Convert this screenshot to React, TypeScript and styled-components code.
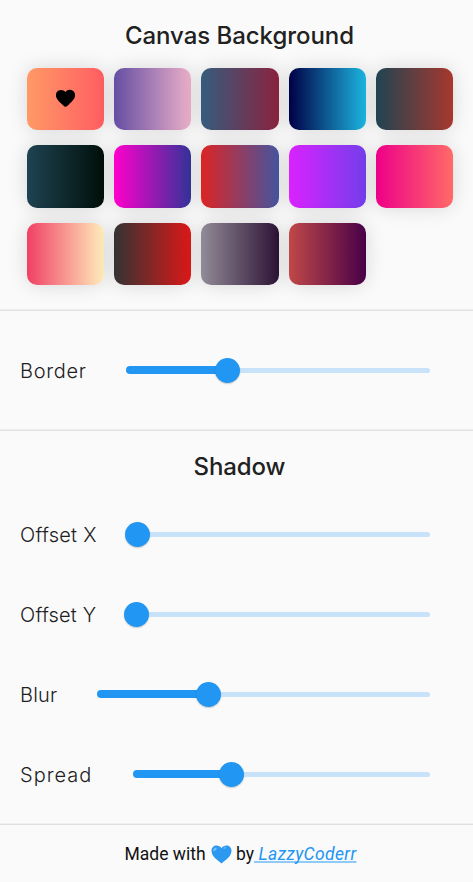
import React from 'react';
import styled, { createGlobalStyle } from 'styled-components';

const GlobalStyle = createGlobalStyle`
  *, *::before, *::after { box-sizing: border-box; }
  html, body { margin: 0; padding: 0; background: #fafafa; }
  body { font-family: Inter, sans-serif; color: #212121; overflow: hidden; }
`;

const Page = styled.main`
  display: flex;
  flex-direction: column;
  width: 100%;
  height: 882px;
  background: #fafafa;
`;

const Section = styled.section<{ $height: number }>`
  flex: none;
  height: ${(p) => p.$height}px;
  border-bottom: 1px solid #e0e0e0;
  box-shadow: inset 0 -1px 0 #efefef;
`;

const Title = styled.h2<{ $spacing: number }>`
  margin: 0;
  height: 54px;
  padding: 18px 0 0 6px;
  font-size: 24px;
  font-weight: 500;
  line-height: 36px;
  text-align: center;
  letter-spacing: ${(p) => p.$spacing}px;
  white-space: nowrap;
`;

const Swatches = styled.div`
  display: grid;
  grid-template-columns: repeat(5, 77.4px);
  grid-auto-rows: 62.3px;
  column-gap: 9.85px;
  row-gap: 15.2px;
  padding: 13.8px 0 0 26.8px;
`;

const Swatch = styled.button<{ $from: string; $to: string }>`
  display: flex;
  align-items: center;
  justify-content: center;
  padding: 0;
  border: 0;
  border-radius: 10px;
  background: linear-gradient(90deg, ${(p) => p.$from}, ${(p) => p.$to});
  box-shadow: 0 0 20px rgba(0, 0, 0, 0.14);
`;

const Row = styled.div<{ $height: number }>`
  display: flex;
  align-items: center;
  height: ${(p) => p.$height}px;
  padding: 0 43px 0 20px;
`;

const SliderList = styled.div`
  padding-top: 9px;
`;

const Label = styled.label<{ $width: number; $spacing: number }>`
  flex: none;
  width: ${(p) => p.$width}px;
  padding-top: 2px;
  font-size: 20px;
  font-weight: 300;
  line-height: 30px;
  letter-spacing: ${(p) => p.$spacing}px;
  white-space: nowrap;
`;

const Slider = styled.div`
  display: flex;
  flex: 1;
  align-items: center;
  height: 26px;
`;

const Active = styled.div<{ $width: number }>`
  flex: none;
  width: ${(p) => p.$width}px;
  height: 7.6px;
  border-radius: 4px 0 0 4px;
  background: #2196f3;
`;

const Thumb = styled.div`
  flex: none;
  width: 25px;
  height: 25px;
  margin-left: -1px;
  border-radius: 50%;
  background: #2196f3;
  box-shadow: 0 1px 1.5px rgba(0, 0, 0, 0.2);
  z-index: 1;
`;

const Rest = styled.div`
  flex: 1;
  height: 5px;
  margin-left: -2px;
  border-radius: 0 3px 3px 0;
  background: #c7e2f9;
`;

const Footer = styled.footer`
  display: flex;
  align-items: center;
  height: 57px;
  padding: 1px 0 0 124.5px;
  color: #111;
  font: 400 17.5px/24px Roboto, sans-serif;
  white-space: pre;
`;

const Heart = styled.svg`
  flex: none;
  margin: 0 0 0 5px;
`;

const Author = styled.a`
  color: #2196f3;
  font-style: italic;
  letter-spacing: 0.35px;
  text-decoration: underline;
  text-decoration-color: #90caf9;
  text-decoration-thickness: 2px;
  text-underline-offset: 1px;
  text-decoration-skip-ink: none;
`;

const gradients: [string, string][] = [
  ['#ff9966', '#ff5e62'],
  ['#654ea3', '#eaafc8'],
  ['#355c7d', '#8a2340'],
  ['#000046', '#1cb5e0'],
  ['#1f4452', '#a8382e'],
  ['#1e4351', '#000f0a'],
  ['#ff00cc', '#333399'],
  ['#dd2424', '#45559f'],
  ['#da22ff', '#733eeb'],
  ['#ee0088', '#ff6a68'],
  ['#f04065', '#ffedbc'],
  ['#333333', '#dd1818'],
  ['#928b97', '#2c1335'],
  ['#c04848', '#480048'],
];

type SliderSpec = { label: string; spacing: number; start: number; value: number };

const border: SliderSpec = { label: 'Border', spacing: 0.7, start: 126, value: 90 };
const shadow: SliderSpec[] = [
  { label: 'Offset X', spacing: 0.25, start: 126, value: 0 },
  { label: 'Offset Y', spacing: 0.2, start: 124.6, value: 0 },
  { label: 'Blur', spacing: 0.2, start: 97, value: 100 },
  { label: 'Spread', spacing: 1, start: 132.5, value: 87.5 },
];

function SliderRow({ spec, height }: { spec: SliderSpec; height: number }) {
  return (
    <Row $height={height}>
      <Label $width={spec.start - 20} $spacing={spec.spacing}>{spec.label}</Label>
      <Slider>
        <Active $width={spec.value} />
        <Thumb />
        <Rest />
      </Slider>
    </Row>
  );
}

export default function App() {
  return (
    <>
      <GlobalStyle />
      <Page>
        <Section $height={311}>
          <Title $spacing={-0.05}>Canvas Background</Title>
          <Swatches>
            {gradients.map(([from, to], i) => (
              <Swatch key={from} $from={from} $to={to} aria-label={`Gradient ${i + 1}`}>
                {i === 0 && (
                  <svg width="23" height="23" viewBox="0 0 24 24">
                    <path d="M13.35 20.13c-.76.69-1.93.69-2.69-.01l-.11-.1C5.3 15.27 1.87 12.16 2 8.28c.06-1.7.93-3.33 2.34-4.29 2.64-1.8 5.9-.96 7.66 1.1 1.76-2.06 5.02-2.91 7.66-1.1 1.41.96 2.28 2.59 2.34 4.29.14 3.88-3.3 6.99-8.55 11.76l-.1.09z" />
                  </svg>
                )}
              </Swatch>
            ))}
          </Swatches>
        </Section>
        <Section $height={120}><SliderRow spec={border} height={118} /></Section>
        <Section $height={394}>
          <Title $spacing={-0.1}>Shadow</Title>
          <SliderList>
            {shadow.map((spec) => <SliderRow key={spec.label} spec={spec} height={80} />)}
          </SliderList>
        </Section>
        <Footer>
          <span>Made with</span>
          <Heart width="21" height="19" viewBox="0 0 21 19">
            <path d="M10.5 18.5C8 16.2.5 12 .5 5.800.5 2.600 2.800.6 5.400.6c2.200 0 4 1 5.100 2.700C11.600 1.600 13.400.6 15.600.6c2.600 0 4.900 2 4.900 5.200 0 6.200-7.500 10.400-10 12.700z" fill="#2c98f0" />
            <ellipse cx="4" cy="4.300" rx="2.200" ry="1.100" transform="rotate(-48 4 4.300)" fill="#74c5fa" />
            <ellipse cx="13.800" cy="2.900" rx="1.600" ry=".7" transform="rotate(-35 13.800 2.900)" fill="#63b9f8" />
          </Heart>
          <span> by</span>
          <Author> LazzyCoderr</Author>
        </Footer>
      </Page>
    </>
  );
}
